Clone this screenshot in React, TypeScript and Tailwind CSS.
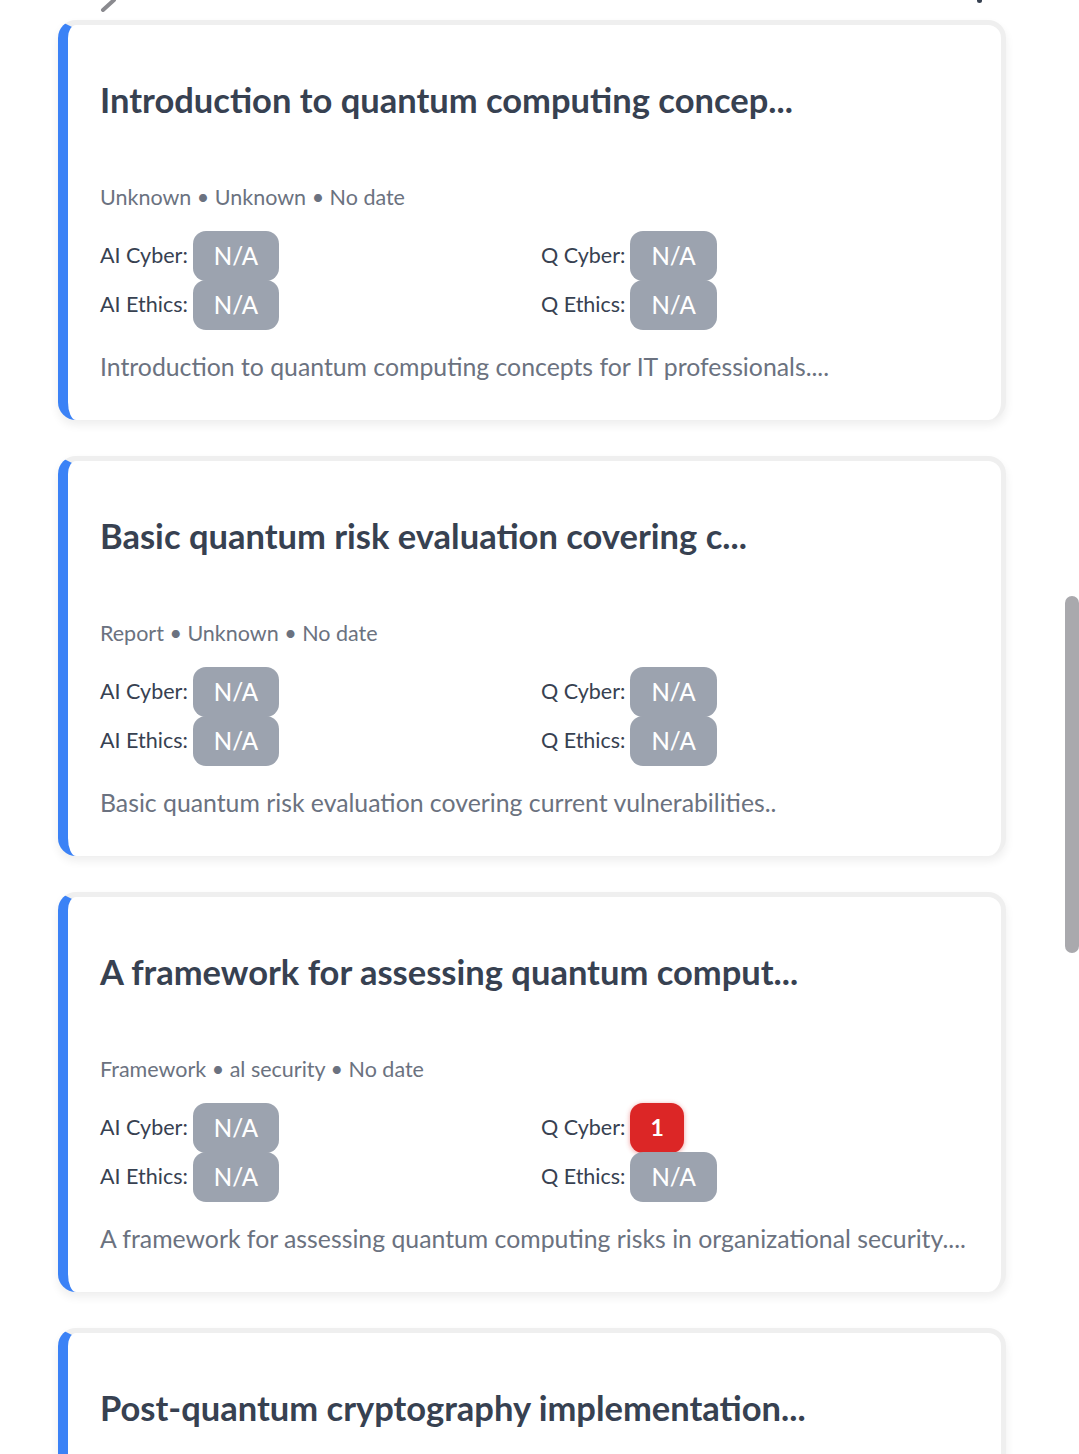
import React from "react";

type Score = { label: string; value: string; red?: boolean };
type Item = {
  title: string;
  meta?: string;
  scores?: [Score, Score, Score, Score];
  desc?: string;
};

const na = "N/A";

const items: Item[] = [
  {
    title: "Introduction to quantum computing concep...",
    meta: "Unknown • Unknown • No date",
    scores: [
      { label: "AI Cyber:", value: na },
      { label: "Q Cyber:", value: na },
      { label: "AI Ethics:", value: na },
      { label: "Q Ethics:", value: na },
    ],
    desc: "Introduction to quantum computing concepts for IT professionals....",
  },
  {
    title: "Basic quantum risk evaluation covering c...",
    meta: "Report • Unknown • No date",
    scores: [
      { label: "AI Cyber:", value: na },
      { label: "Q Cyber:", value: na },
      { label: "AI Ethics:", value: na },
      { label: "Q Ethics:", value: na },
    ],
    desc: "Basic quantum risk evaluation covering current vulnerabilities..",
  },
  {
    title: "A framework for assessing quantum comput...",
    meta: "Framework • al security • No date",
    scores: [
      { label: "AI Cyber:", value: na },
      { label: "Q Cyber:", value: "1", red: true },
      { label: "AI Ethics:", value: na },
      { label: "Q Ethics:", value: na },
    ],
    desc: "A framework for assessing quantum computing risks in organizational security....",
  },
  {
    title: "Post-quantum cryptography implementation...",
  },
];

function Badge({ s }: { s: Score }) {
  return s.red ? (
    <span className="inline-flex h-[50px] items-center justify-center rounded-[13px] bg-[#dc2626] px-[20px] text-[23px] font-bold text-white shadow-[0_1px_5px_rgba(220,38,38,0.45)]">
      {s.value}
    </span>
  ) : (
    <span className="inline-flex h-[50px] items-center justify-center rounded-[13px] bg-[#9ca3af] px-[21px] text-[24px] font-medium text-white">
      {s.value}
    </span>
  );
}

function ScoreCell({ s }: { s: Score }) {
  return (
    <div className="flex h-[49px] items-center gap-[5px]">
      <span className="text-[21.5px] text-[#374151]">{s.label}</span>
      <Badge s={s} />
    </div>
  );
}

function Card({ item }: { item: Item }) {
  return (
    <div className="h-[400px] w-[948px] shrink-0 rounded-[18px] border-[5px] border-b-0 border-[#efefef] border-l-[10px] border-l-[#3b82f6] bg-white shadow-[0_5px_10px_rgba(0,0,0,0.07)]">
      <div className="px-[32px] pt-[53px]">
        <h2 className="text-[34.5px] font-bold leading-[44px] text-[#374151] whitespace-nowrap">
          {item.title}
        </h2>
        {item.meta && (
          <>
            <p className="mt-[60px] text-[21.5px] leading-[30px] text-[#6b7280]">
              {item.meta}
            </p>
            <div className="mt-[19px] grid grid-cols-[441px_1fr]">
              {item.scores!.map((s, i) => (
                <ScoreCell key={i} s={s} />
              ))}
            </div>
            <p className="mt-[22px] text-[24.8px] leading-[32px] text-[#6b7280] whitespace-nowrap">
              {item.desc}
            </p>
          </>
        )}
      </div>
    </div>
  );
}

export default function App() {
  return (
    <div
      className="relative h-[1454px] w-[1079px] overflow-hidden bg-white"
      style={{ fontFamily: "Lato, 'Noto Sans', sans-serif" }}
    >
      <svg className="absolute left-[100px] top-0" width="24" height="12" viewBox="0 0 24 12">
        <line x1="3" y1="10" x2="14" y2="0" stroke="#8a8a8f" strokeWidth="4" strokeLinecap="round" />
      </svg>
      <div className="absolute left-[977px] top-0 h-[3px] w-[5px] rounded-b-full bg-[#374151]" />
      <div className="flex flex-col gap-[36px] pl-[58px] pt-[20px]">
        {items.map((it, i) => (
          <Card key={i} item={it} />
        ))}
      </div>
      <div className="absolute left-[1065px] top-[596px] h-[357px] w-[14px] rounded-full bg-[#a9a9ad]" />
    </div>
  );
}
